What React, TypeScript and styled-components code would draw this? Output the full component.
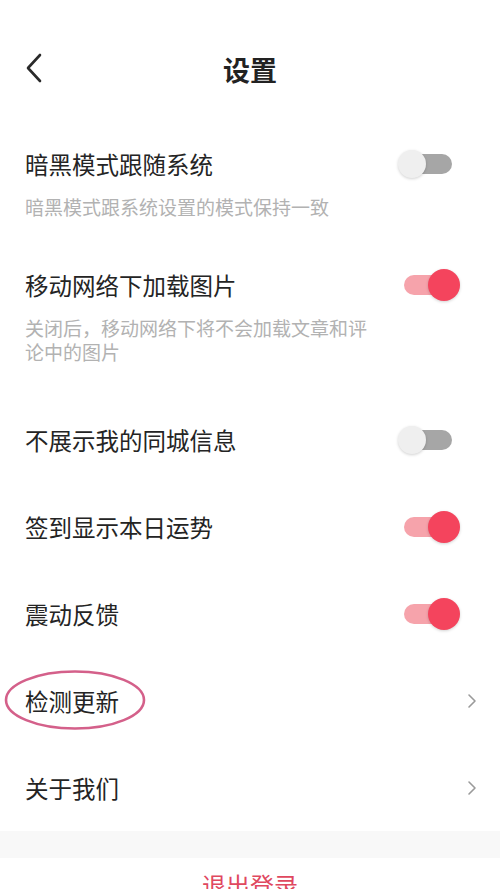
import styled, { createGlobalStyle } from 'styled-components';

const GlobalStyle = createGlobalStyle`
  html, body {
    margin: 0;
    padding: 0;
    background: #ffffff;
  }
  body {
    font-family: "Noto Sans CJK SC", "Noto Sans", sans-serif;
    color: #222222;
  }
`;

const Page = styled.div`
  width: 500px;
  min-height: 889px;
  background: #ffffff;
  overflow: hidden;
`;

const Header = styled.div`
  position: relative;
  height: 130px;
  box-sizing: border-box;
  padding: 40px 25px 30px;
  display: flex;
  align-items: center;
  justify-content: center;
`;

const BackButton = styled.button`
  position: absolute;
  left: 22px;
  top: 51px;
  width: 24px;
  height: 34px;
  padding: 0;
  border: none;
  background: none;
  display: flex;
  align-items: center;
  justify-content: center;
`;

const Title = styled.h1`
  margin: 0;
  font-size: 27px;
  font-weight: 700;
  color: #222222;
  line-height: 60px;
`;

const Row = styled.div<{ $withSub?: boolean }>`
  position: relative;
  box-sizing: border-box;
  padding: ${(p) => (p.$withSub ? '17.5px 40px 32.5px 25px' : '0 40px 0 25px')};
  min-height: ${(p) => (p.$withSub ? 'auto' : '87px')};
  display: flex;
  flex-direction: column;
  justify-content: center;
`;

const TitleLine = styled.div`
  display: flex;
  align-items: center;
  justify-content: space-between;
  height: 32px;
`;

const Label = styled.span`
  font-size: 23.5px;
  line-height: 32px;
  color: #242424;
`;

const Sub = styled.p`
  margin: 15px 0 0;
  max-width: 350px;
  font-size: 19px;
  line-height: 24px;
  color: #b2b2b2;
`;

const Track = styled.div<{ $on: boolean }>`
  position: relative;
  width: ${(p) => (p.$on ? '46px' : '50px')};
  height: 20px;
  border-radius: 10px;
  margin-right: ${(p) => (p.$on ? '10px' : '8px')};
  background: ${(p) => (p.$on ? '#f6a3ab' : '#a6a6a6')};
`;

const Knob = styled.div<{ $on: boolean }>`
  position: absolute;
  top: 50%;
  width: ${(p) => (p.$on ? '32px' : '28px')};
  height: ${(p) => (p.$on ? '32px' : '28px')};
  border-radius: 50%;
  transform: translateY(-50%);
  ${(p) => (p.$on ? 'right: -10px;' : 'left: -4px;')}
  background: ${(p) => (p.$on ? '#f4445d' : '#efefef')};
  box-shadow: 0 1px 3px rgba(0, 0, 0, 0.18);
`;

const Chevron = styled.span`
  display: flex;
  margin-right: -17px;
`;

const Gap = styled.div`
  height: 27px;
  background: #f8f8f8;
`;

const Logout = styled.div`
  padding-top: 10px;
  text-align: center;
  font-size: 24px;
  line-height: 34px;
  color: #e0485f;
`;

const Annotation = styled.svg`
  position: absolute;
  left: 3px;
  top: 12px;
  pointer-events: none;
`;

const Toggle = ({ on }: { on: boolean }) => (
  <Track $on={on}>
    <Knob $on={on} />
  </Track>
);

const Arrow = () => (
  <Chevron>
    <svg width="10" height="16" viewBox="0 0 10 16">
      <path d="M2 2l6 6-6 6" fill="none" stroke="#9a9a9a" strokeWidth="1.6" strokeLinecap="round" strokeLinejoin="round" />
    </svg>
  </Chevron>
);

const switches = [
  { label: '不展示我的同城信息', on: false },
  { label: '签到显示本日运势', on: true },
  { label: '震动反馈', on: true },
];

export default function App() {
  return (
    <Page>
      <GlobalStyle />
      <Header>
        <BackButton aria-label="返回">
          <svg width="18" height="30" viewBox="0 0 18 30">
            <path d="M15 2L3 15l12 13" fill="none" stroke="#2a2a2a" strokeWidth="2.6" strokeLinecap="round" strokeLinejoin="round" />
          </svg>
        </BackButton>
        <Title>设置</Title>
      </Header>

      <Row $withSub>
        <TitleLine>
          <Label>暗黑模式跟随系统</Label>
          <Toggle on={false} />
        </TitleLine>
        <Sub>暗黑模式跟系统设置的模式保持一致</Sub>
      </Row>

      <Row $withSub>
        <TitleLine>
          <Label>移动网络下加载图片</Label>
          <Toggle on />
        </TitleLine>
        <Sub>关闭后，移动网络下将不会加载文章和评论中的图片</Sub>
      </Row>

      {switches.map((s) => (
        <Row key={s.label}>
          <TitleLine>
            <Label>{s.label}</Label>
            <Toggle on={s.on} />
          </TitleLine>
        </Row>
      ))}

      <Row>
        <TitleLine>
          <Label>检测更新</Label>
          <Arrow />
        </TitleLine>
        <Annotation width="144" height="64" viewBox="0 0 144 64">
          <ellipse cx="72" cy="31" rx="69" ry="28.5" fill="none" stroke="#d4608a" strokeWidth="2.6" />
        </Annotation>
      </Row>

      <Row>
        <TitleLine>
          <Label>关于我们</Label>
          <Arrow />
        </TitleLine>
      </Row>

      <Gap />
      <Logout>退出登录</Logout>
    </Page>
  );
}
